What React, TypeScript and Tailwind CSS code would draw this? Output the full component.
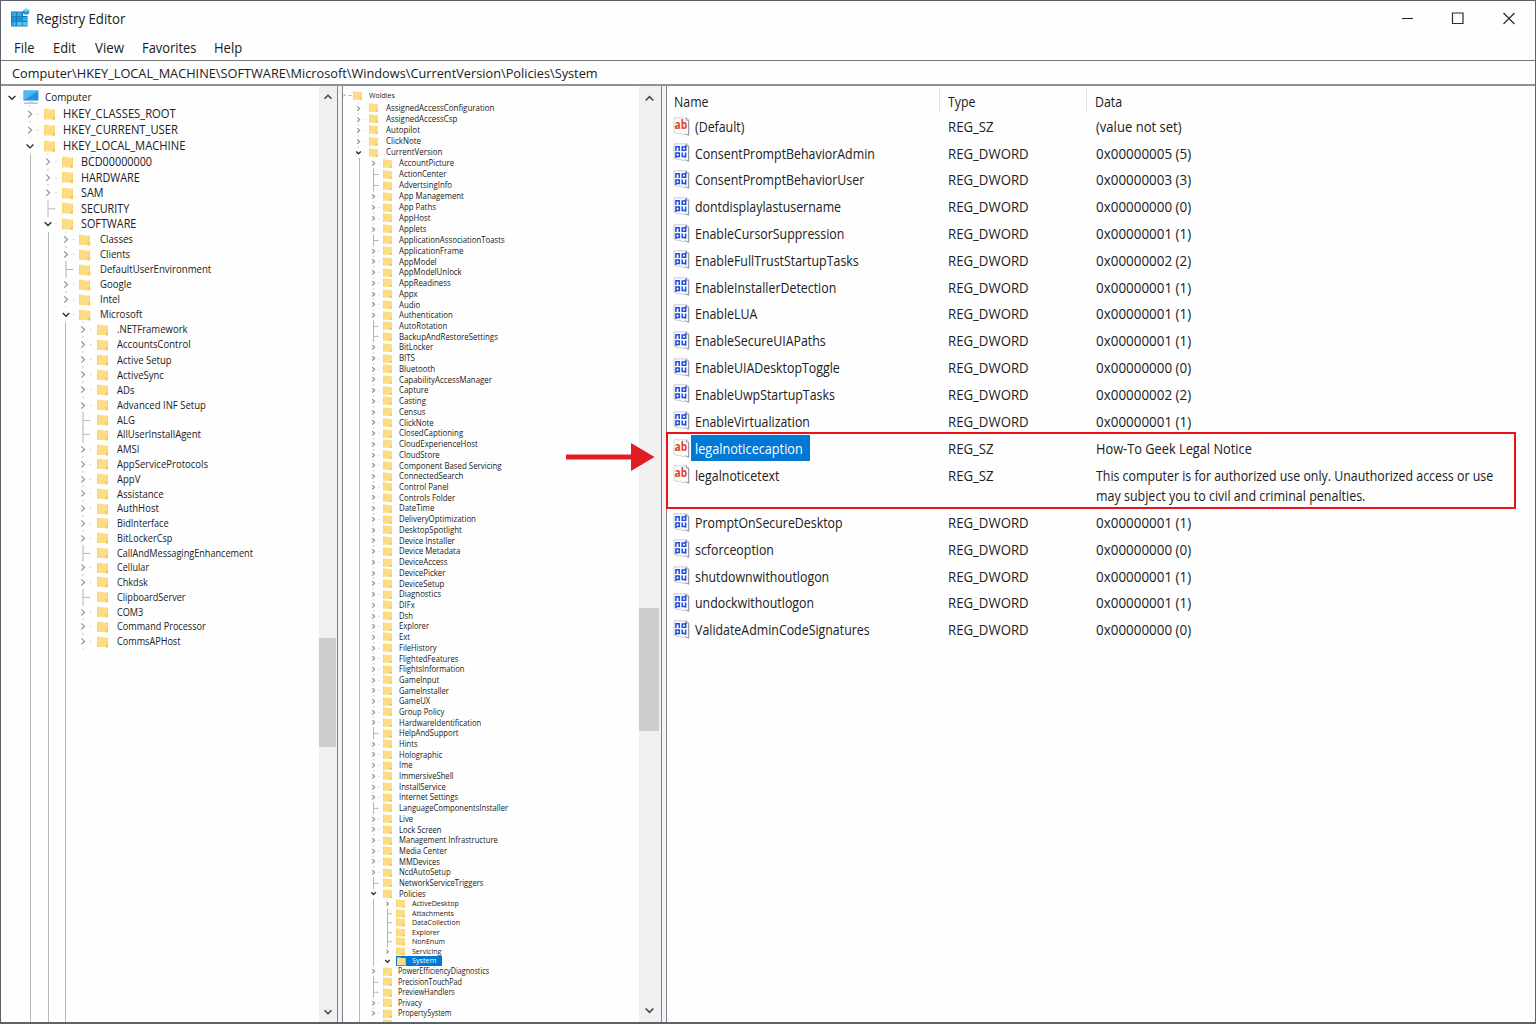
import type { ReactNode } from 'react';
import clsx from 'clsx';

type Kind = 'open' | 'closed' | 'leaf';

interface Level {
  row: string;
  marker: string;
  folder: string;
  label: string;
}

// A leading "-" marks a key without subkeys, "+" an expanded one.
const ROOT_KEYS = ['HKEY_CLASSES_ROOT', 'HKEY_CURRENT_USER', '+HKEY_LOCAL_MACHINE'];
const MACHINE_KEYS = ['BCD00000000', 'HARDWARE', 'SAM', '-SECURITY', '+SOFTWARE'];
const SOFTWARE_KEYS = ['Classes', 'Clients', '-DefaultUserEnvironment', 'Google', 'Intel', '+Microsoft'];
const MICROSOFT_KEYS_A = ['.NETFramework', 'AccountsControl', 'Active Setup', 'ActiveSync', 'ADs', 'Advanced INF Setup'];
const MICROSOFT_KEYS_B = ['-ALG', '-AllUserInstallAgent', 'AMSI', 'AppServiceProtocols', 'AppV', 'Assistance', 'AuthHost'];
const MICROSOFT_KEYS_C = [
  'BidInterface', 'BitLockerCsp', '-CallAndMessagingEnhancement', 'Cellular', 'Chkdsk', '-ClipboardServer', 'COM3',
  'Command Processor', 'CommsAPHost',
];

const WINDOWS_KEYS = ['AssignedAccessConfiguration', 'AssignedAccessCsp', 'Autopilot', 'ClickNote', '+CurrentVersion'];
const VERSION_KEYS_A = [
  'AccountPicture', '-ActionCenter', '-AdvertsingInfo', 'App Management', 'App Paths', 'AppHost', 'Applets',
  '-ApplicationAssociationToasts',
];
const VERSION_KEYS_B = [
  'ApplicationFrame', 'AppModel', 'AppModelUnlock', 'AppReadiness', 'Appx', 'Audio', 'Authentication',
  '-AutoRotation', '-BackupAndRestoreSettings', 'BitLocker', 'BITS', 'Bluetooth', 'CapabilityAccessManager',
  'Capture', 'Casting', 'Census', 'ClickNote', 'ClosedCaptioning', 'CloudExperienceHost', 'CloudStore',
  'Component Based Servicing', 'ConnectedSearch', 'Control Panel', 'Controls Folder', 'DateTime',
  'DeliveryOptimization', 'DesktopSpotlight', 'Device Installer', 'Device Metadata', 'DeviceAccess',
  'DevicePicker', 'DeviceSetup', 'Diagnostics',
];
const VERSION_KEYS_C = [
  'DIFx', 'Dsh', 'Explorer', 'Ext', 'FileHistory', 'FlightedFeatures', 'FlightsInformation', 'GameInput',
  'GameInstaller', 'GameUX', 'Group Policy', 'HardwareIdentification', '-HelpAndSupport', 'Hints', 'Holographic',
  'Ime', 'ImmersiveShell', 'InstallService', 'Internet Settings', '-LanguageComponentsInstaller', 'Live',
  'Lock Screen', 'Management Infrastructure', 'Media Center', 'MMDevices', 'NcdAutoSetup',
  '-NetworkServiceTriggers', '+Policies',
];
const POLICY_KEYS = ['ActiveDesktop', '-Attachments', '-DataCollection', '-Explorer', '-NonEnum', 'Servicing'];
const VERSION_KEYS_D = ['PowerEfficiencyDiagnostics', '-PrecisionTouchPad', '-PreviewHandlers', 'Privacy', 'PropertySystem'];

const VALUES_TOP: [string, string][] = [
  ['ConsentPromptBehaviorAdmin', '0x00000005 (5)'],
  ['ConsentPromptBehaviorUser', '0x00000003 (3)'],
  ['dontdisplaylastusername', '0x00000000 (0)'],
  ['EnableCursorSuppression', '0x00000001 (1)'],
  ['EnableFullTrustStartupTasks', '0x00000002 (2)'],
  ['EnableInstallerDetection', '0x00000001 (1)'],
  ['EnableLUA', '0x00000001 (1)'],
  ['EnableSecureUIAPaths', '0x00000001 (1)'],
  ['EnableUIADesktopToggle', '0x00000000 (0)'],
  ['EnableUwpStartupTasks', '0x00000002 (2)'],
  ['EnableVirtualization', '0x00000001 (1)'],
];
const VALUES_BOTTOM: [string, string][] = [
  ['PromptOnSecureDesktop', '0x00000001 (1)'],
  ['scforceoption', '0x00000000 (0)'],
  ['shutdownwithoutlogon', '0x00000001 (1)'],
  ['undockwithoutlogon', '0x00000001 (1)'],
  ['ValidateAdminCodeSignatures', '0x00000000 (0)'],
];

const L1: Level = {
  row: 'h-[16.15px] pl-[21px]',
  marker: 'w-4 mr-[5.5px]',
  folder: 'w-[11.5px] h-[12.5px] mr-[7.5px]',
  label: 'text-[12px] scale-x-[0.935]',
};
const L2: Level = { ...L1, row: 'h-[15.6px] pl-[9px]', label: 'text-[12px] scale-x-[0.9]' };
const L3: Level = {
  row: 'h-[15px] pl-[8.5px]',
  marker: 'w-4 mr-[5.5px]',
  folder: 'w-[11.5px] h-[12px] mr-[9px]',
  label: 'text-[10.8px] scale-x-[0.89]',
};
const L4: Level = { ...L3, row: 'h-[15.1px] pl-[9px]', label: 'text-[10.6px] scale-x-[0.9]' };
const L4_B: Level = { ...L4, row: 'h-[14.78px] pl-[9px]' };
const L4_C: Level = { ...L4_B, label: 'text-[10.6px] scale-x-[0.86]' };

const M1: Level = {
  row: 'h-[11.1px] pl-[10px]',
  marker: 'w-[11px] mr-[5px]',
  folder: 'w-[9px] h-[9.5px] mr-2',
  label: 'text-[8.2px] scale-x-[0.97]',
};
const M2: Level = {
  row: 'h-[10.96px] pl-2',
  marker: 'w-[11px] mr-[3.5px]',
  folder: 'w-[9px] h-[9.5px] mr-[7px]',
  label: 'text-[8.2px] scale-x-[0.955]',
};
const M2_B: Level = { ...M2, row: 'h-[10.74px] pl-2', label: 'text-[8.2px] scale-x-[0.96]' };
const M2_C: Level = { ...M2, row: 'h-[10.69px] pl-2', label: 'text-[8.2px] scale-x-[0.935]' };
const M2_D: Level = { ...M2, row: 'h-[10.5px] pl-2', folder: 'w-[9px] h-[9.5px] mr-[6.5px]', label: 'text-[8.2px] scale-x-[0.88]' };
const M3: Level = {
  row: 'h-[9.5px] pl-[7.5px]',
  marker: 'w-[11px] mr-[3.5px]',
  folder: 'w-[9px] h-[9px] mr-[6.5px]',
  label: 'text-[7.6px] scale-x-[0.93]',
};

function Marker({ kind, className }: { kind: Kind; className: string }) {
  return (
    <svg viewBox="0 0 16 16" fill="none" className={clsx('h-full shrink-0 overflow-visible', className)}>
      {kind === 'leaf' && <path d="M8 -.5V16.5M8 8h7.5" stroke="#b4b4b4" strokeWidth="1" vectorEffect="non-scaling-stroke" />}
      {kind === 'closed' && (
        <>
          <path d="M6.2 4.8 9.6 8l-3.4 3.2" stroke="#8f8f8f" strokeWidth="1.15" vectorEffect="non-scaling-stroke" />
          <path d="M8 -.6v1.4M8 15v1.4M15.5 8h1.4" stroke="#c8c8c8" strokeWidth="1" vectorEffect="non-scaling-stroke" />
        </>
      )}
      {kind === 'open' && (
        <>
          <path d="M4.6 6.4 8 9.8l3.4-3.4" stroke="#2f2f2f" strokeWidth="1.4" vectorEffect="non-scaling-stroke" />
          <path d="M15.5 8h1.4" stroke="#cfcfcf" strokeWidth="1.1" />
        </>
      )}
    </svg>
  );
}

function Folder({ className }: { className: string }) {
  return (
    <svg viewBox="0 0 12 13" preserveAspectRatio="none" className={clsx('shrink-0', className)}>
      <path d="M0 .8h5l1 .7h5.4V12H0z" fill="#fcdd86" />
      <path d="M0 .8h1.2V12H0z" fill="#f8d673" />
      <path d="M10.5 1.5h.9v7h-.9z" fill="#f9d16a" />
      <path d="M8.8 12.4V9.8q0-1 1-1H12v2.6q0 1-1 1z" fill="#f7ca5c" />
    </svg>
  );
}

function Keys({ items, level }: { items: string[]; level: Level }) {
  return (
    <>
      {items.map(item => {
        const kind: Kind = item[0] === '-' ? 'leaf' : item[0] === '+' ? 'open' : 'closed';
        return (
          <div key={item} className={clsx('flex shrink-0 items-center', level.row)}>
            <Marker kind={kind} className={level.marker} />
            <Folder className={level.folder} />
            <span className={clsx('origin-left leading-none whitespace-nowrap', level.label)}>
              {item.replace(/^[-+]/, '')}
            </span>
          </div>
        );
      })}
    </>
  );
}

function Branch({ className, children }: { className: string; children: ReactNode }) {
  return (
    <div className="flex grow">
      <div className={clsx('w-px shrink-0 bg-[#b8b8b8]', className)} />
      <div className="flex flex-col">{children}</div>
    </div>
  );
}

function Arrow({ up, className }: { up?: boolean; className: string }) {
  return (
    <svg viewBox="0 0 10 6" fill="none" className={className}>
      <path d={up ? 'M1.5 4.8 5 1.3l3.5 3.5' : 'M1.5 1.2 5 4.7l3.5-3.5'} stroke="#454545" strokeWidth="1.5" />
    </svg>
  );
}

function StringIcon() {
  return (
    <svg viewBox="0 0 17 19" className="h-[19px] w-[17px] shrink-0">
      <path d="M1 .8h12.5l2.3 2v15.4l-3-1.2-3 .6-3-1.4-3.2.2L1 15.2z" fill="#fdfdfd" stroke="#c4c8cd" strokeWidth=".8" />
      <path d="M13.4.8v2.4h2.2v15l-3-1.3" fill="none" stroke="#8b9099" strokeWidth=".9" />
      <text x="1.6" y="12" fill="#e0401a" fontFamily="Open Sans, sans-serif" fontWeight="700" fontSize="12.5" textLength="12.6" lengthAdjust="spacingAndGlyphs">
        ab
      </text>
    </svg>
  );
}

function DwordIcon() {
  return (
    <svg viewBox="0 0 17 19" fill="none" className="h-[19px] w-[17px] shrink-0">
      <path d="M1 .8h12.5l2.3 2v15.4l-3-1.2-3 .6-3-1.4-3.2.2L1 15.2z" fill="#f7faff" stroke="#b9c0cc" strokeWidth=".8" />
      <path d="M13.4.8v2.4h2.2v15l-3-1.3" stroke="#8b9099" strokeWidth=".9" />
      <path
        d="M2.9 8V3.8h3.3V8M12.7 2.2v5.1H9.2V4h3.5M2.9 15V10h3.4v3.5H2.9M9.2 9.4v4.1h3.4M12.6 9.4v5.4"
        stroke="#1d4be6"
        strokeWidth="1.5"
      />
    </svg>
  );
}

function ValueRow({ icon, name, type, selected, children }: {
  icon: ReactNode;
  name: string;
  type: string;
  selected?: boolean;
  children: ReactNode;
}) {
  return (
    <div className="flex h-[26.8px] items-center pl-[6px] text-[15px]">
      <div className="mr-px flex">{icon}</div>
      <div className="flex w-[257px] shrink-0">
        <div className={clsx('flex h-[26px] items-center pl-1', selected && 'w-[119px] bg-[#0078d4] text-white')}>
          <span className={clsx('origin-left whitespace-nowrap', selected ? 'scale-x-[0.845]' : 'scale-x-[0.825]')}>
            {name}
          </span>
        </div>
      </div>
      <div className="w-[148px] shrink-0 whitespace-nowrap">
        <span className="inline-block origin-left scale-x-[0.88]">{type}</span>
      </div>
      <div className="whitespace-nowrap">{children}</div>
    </div>
  );
}

function Data({ children, className }: { children: ReactNode; className: string }) {
  return <span className={clsx('inline-block origin-left', className)}>{children}</span>;
}

function DwordRows({ rows }: { rows: [string, string][] }) {
  return (
    <>
      {rows.map(([name, data]) => (
        <ValueRow key={name} icon={<DwordIcon />} name={name} type="REG_DWORD">
          <Data className="scale-x-[0.895]">{data}</Data>
        </ValueRow>
      ))}
    </>
  );
}

function TitleBar() {
  return (
    <div className="flex h-[35px] shrink-0 items-center justify-between pr-[20px] pl-[9px]">
      <div className="flex items-center">
        <svg viewBox="0 0 20 20" className="mr-[6px] h-5 w-5">
          <path d="M1 3.5h12V8h4.5v10.5H1z" fill="#1175b5" />
          <path d="M1.6 4.2h4.6v4H1.6zM7 4.2h4.8v4H7z" fill="#35a8e0" />
          <path d="M1.6 9h4.6v4H1.6zM7 9h4.8v4H7z" fill="#1c93d2" />
          <path d="M12.6 9h4.3v4h-4.3zM1.6 13.8h4.6v4H1.6z" fill="#2fb0e8" />
          <path d="M7 13.8h4.8v4H7zM12.6 13.8h4.3v4h-4.3z" fill="#4cc6f2" />
          <path d="M13 2.2 16.2.6l3 1.6v3.2l-3 1.7L13 5.4z" fill="#2b9bd6" />
          <path d="m13 2.2 3.2 1.5 3-1.5L16.2.6z" fill="#7fd4f5" />
        </svg>
        <span className="origin-left scale-x-[0.905] pt-px text-[14.6px] whitespace-nowrap">Registry Editor</span>
      </div>
      <svg viewBox="0 0 114 14" fill="none" stroke="#2b2b2b" className="mb-[2px] h-[14px] w-[114px]">
        <path d="M1 7.5h11" strokeWidth="1.1" />
        <path d="M51.5 2H62v10.5H51.5z" strokeWidth="1.2" />
        <path d="m102.5 2 11 11M113.5 2l-11 11" strokeWidth="1.2" />
      </svg>
    </div>
  );
}

function MenuBar() {
  return (
    <div className="flex h-6 shrink-0 items-center pb-px pl-[12.5px] text-[14px]">
      <span className="w-[39px] origin-left scale-x-[0.92]">File</span>
      <span className="w-[42px] origin-left scale-x-[0.92]">Edit</span>
      <span className="w-[47.5px] origin-left scale-x-[0.95]">View</span>
      <span className="w-[72px] origin-left scale-x-[0.92]">Favorites</span>
      <span className="origin-left scale-x-[0.93]">Help</span>
    </div>
  );
}

function KeyTree() {
  return (
    <div className="flex w-[337px] shrink-0 border-r border-[#7e838b]">
      <div className="flex min-w-0 grow flex-col overflow-hidden pt-[2.7px]">
        <div className="flex h-[17px] shrink-0 items-center pl-[3px]">
          <Marker kind="open" className="w-4 mr-[3px]" />
          <svg viewBox="0 0 16 15" className="mr-[6px] h-[15px] w-4">
            <path d="M.6.6h14.8v10H.6z" fill="#2492dd" />
            <path d="M.6.6h14.8L.6 10.6z" fill="#4fb7f0" />
            <path d="M5.5 10.6h5v2h-5z" fill="#d3dde4" />
            <path d="M1 12.6h14v1.2H1z" fill="#a9b3ba" />
          </svg>
          <span className="origin-left scale-x-[0.85] text-[11.6px] leading-none">Computer</span>
        </div>
        <Keys items={ROOT_KEYS} level={L1} />
        <Branch className="ml-[29px]">
          <Keys items={MACHINE_KEYS} level={L2} />
          <Branch className="ml-[17px]">
            <Keys items={SOFTWARE_KEYS} level={L3} />
            <Branch className="ml-4">
              <Keys items={MICROSOFT_KEYS_A} level={L4} />
              <Keys items={MICROSOFT_KEYS_B} level={L4_B} />
              <Keys items={MICROSOFT_KEYS_C} level={L4_C} />
            </Branch>
          </Branch>
        </Branch>
      </div>
      <div className="flex w-[18px] shrink-0 flex-col items-center bg-[#f0f0f0] pt-2 pr-[1px] pb-[7px]">
        <Arrow up className="h-[6px] w-[10px] shrink-0" />
        <div className="h-[538px] shrink-0" />
        <div className="h-[109px] w-[17px] shrink-0 bg-[#cdcdcd]" />
        <div className="grow" />
        <Arrow className="h-[6px] w-[10px] shrink-0" />
      </div>
    </div>
  );
}

function WindowsTree() {
  return (
    <div className="flex w-[320px] shrink-0 border-x border-[#7e838b] bg-[#fefefe]">
      <div className="flex min-h-0 min-w-0 grow flex-col overflow-hidden pt-1">
        <div className="mb-[1px] flex h-[11.5px] shrink-0 items-center">
          <svg viewBox="0 0 10 11" fill="none" className="h-[11px] w-[10px]">
            <path d="m.3 6.4 2-2" stroke="#777" />
            <path d="M5 5.5h4" stroke="#c4c4c4" />
          </svg>
          <Folder className="mr-[6.5px] h-[9.5px] w-[9px]" />
          <span className="origin-left scale-x-[0.9] text-[7.8px] leading-none">Woldies</span>
        </div>
        <Keys items={WINDOWS_KEYS} level={M1} />
        <Branch className="ml-4">
          <Keys items={VERSION_KEYS_A} level={M2} />
          <Keys items={VERSION_KEYS_B} level={M2_B} />
          <Keys items={VERSION_KEYS_C} level={M2_C} />
          <div className="flex">
            <div className="ml-[13px] w-px shrink-0 bg-[#b8b8b8]" />
            <div>
              <Keys items={POLICY_KEYS} level={M3} />
              <div className="flex h-[10.2px] items-center pl-[7.5px]">
                <Marker kind="open" className="w-[11px] mr-[3px]" />
                <div className="flex h-[10px] w-[46px] items-center bg-[#0078d7] text-white">
                  <Folder className="mr-[6.5px] ml-px h-[9px] w-[9px]" />
                  <span className="origin-left scale-x-[0.95] text-[7.6px] leading-none">System</span>
                </div>
              </div>
            </div>
          </div>
          <Keys items={VERSION_KEYS_D} level={M2_D} />
          <div className="flex h-[3px] shrink-0 items-start overflow-hidden pl-[22.5px]">
            <Folder className="h-[9.5px] w-[9px]" />
          </div>
        </Branch>
      </div>
      <div className="flex w-[22px] shrink-0 flex-col items-center bg-[#f0f0f0] pt-[9px] pr-[2px] pb-2">
        <Arrow up className="h-[7px] w-[11px] shrink-0" />
        <div className="h-[506px] shrink-0" />
        <div className="h-[123px] w-5 shrink-0 bg-[#cdcdcd]" />
        <div className="grow" />
        <Arrow className="h-[7px] w-[11px] shrink-0" />
      </div>
    </div>
  );
}

function ValueList() {
  return (
    <div className="relative min-w-0 grow border-l border-[#7e838b]">
      <div className="flex h-[27px] items-center pt-[2px] text-[14.2px]">
        <div className="flex h-full w-[273px] items-center border-r border-[#e2e2e2] pt-[2px] pl-[7px]">
          <span className="origin-left scale-x-[0.87]">Name</span>
        </div>
        <div className="flex h-full w-[147px] items-center border-r border-[#e2e2e2] pt-[2px] pl-2">
          <span className="origin-left scale-x-[0.87]">Type</span>
        </div>
        <div className="flex h-full items-center pt-[2px] pl-2">
          <span className="origin-left scale-x-[0.87]">Data</span>
        </div>
      </div>
      <div className="-mt-[0.4px]">
        <ValueRow icon={<StringIcon />} name="(Default)" type="REG_SZ">
          <Data className="scale-x-[0.87]">(value not set)</Data>
        </ValueRow>
        <DwordRows rows={VALUES_TOP} />
        <div className="h-[0.5px]" />
        <ValueRow icon={<StringIcon />} name="legalnoticecaption" type="REG_SZ" selected>
          <Data className="scale-x-[0.853]">How-To Geek Legal Notice</Data>
        </ValueRow>
        <ValueRow icon={<StringIcon />} name="legalnoticetext" type="REG_SZ">
          <Data className="scale-x-[0.824]">This computer is for authorized use only. Unauthorized access or use</Data>
        </ValueRow>
        <div className="h-[20.5px] pl-[429px] text-[15px] leading-[14px] whitespace-nowrap">
          <Data className="scale-x-[0.832]">may subject you to civil and criminal penalties.</Data>
        </div>
        <DwordRows rows={VALUES_BOTTOM} />
      </div>
      <div className="absolute top-[346px] left-[-1px] h-[77px] w-[850px] border-[2.5px] border-[#ee1118]" />
      <svg viewBox="0 0 90 30" className="absolute top-[356px] left-[-101px] h-[30px] w-[90px]">
        <path d="M0 12.5h65V1l23.5 14L65 29V17.5H0z" fill="#e31b23" />
      </svg>
    </div>
  );
}

export default function App() {
  return (
    <div className="flex h-[1024px] w-[1536px] flex-col overflow-hidden border border-b-2 border-[#5d6269] bg-[#fefefe] font-['Open_Sans','Noto_Sans',sans-serif] text-[#202020]">
      <TitleBar />
      <MenuBar />
      <div className="flex h-[26px] shrink-0 items-center border-t border-b-2 border-t-[#77797d] border-b-[#8f9195] pt-[2px] pl-[11px] text-[13.2px]">
        <span className="origin-left scale-x-[0.967] whitespace-nowrap">
          Computer\HKEY_LOCAL_MACHINE\SOFTWARE\Microsoft\Windows\CurrentVersion\Policies\System
        </span>
      </div>
      <div className="flex min-h-0 grow">
        <KeyTree />
        <div className="w-1 shrink-0 bg-[#f1f3f6]" />
        <WindowsTree />
        <div className="w-1 shrink-0 bg-[#f1f3f6]" />
        <ValueList />
      </div>
    </div>
  );
}
